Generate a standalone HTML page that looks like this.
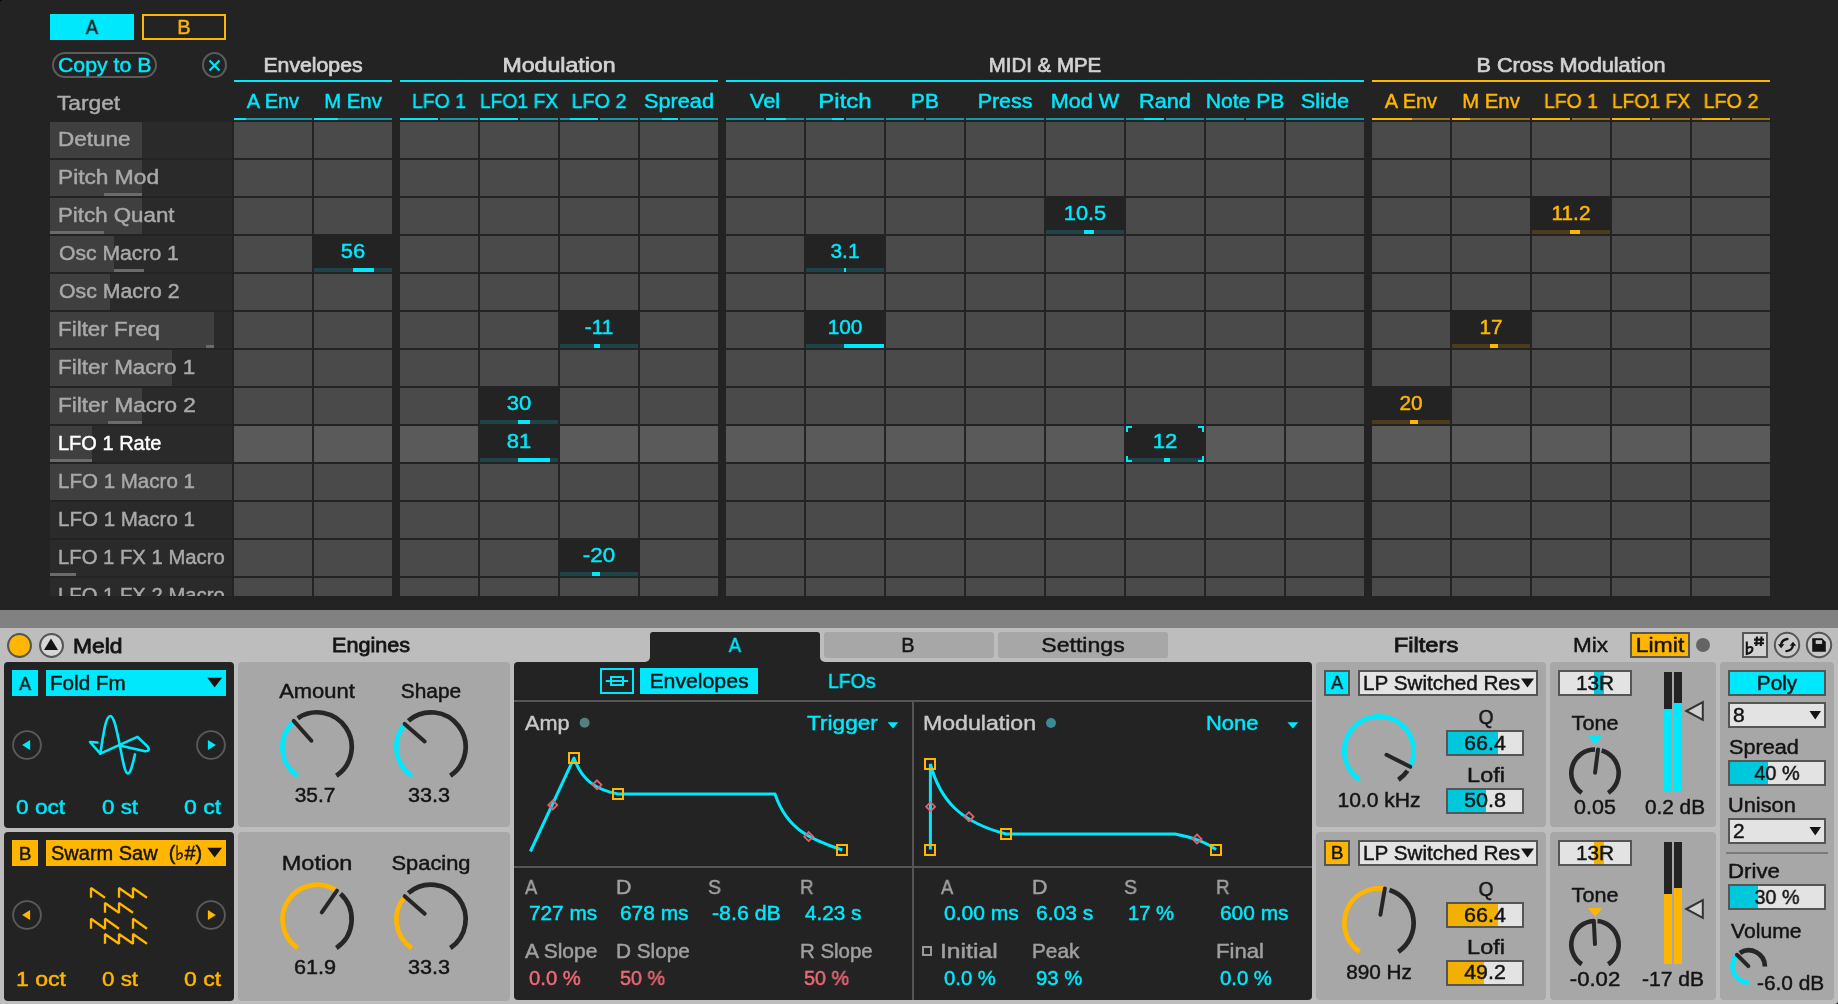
<!DOCTYPE html>
<html><head><meta charset="utf-8"><style>
html,body{margin:0;padding:0;background:#232323}
#root{position:relative;width:1838px;height:1004px;overflow:hidden;background:#232323;font-family:"Liberation Sans",sans-serif}
.r{position:absolute}
.t{position:absolute;line-height:1;white-space:nowrap;-webkit-text-stroke:0.45px currentColor;will-change:transform}
svg.ov{position:absolute;left:0;top:0}
</style></head><body><div id="root">
<div class="r" style="left:50px;top:14px;width:84px;height:26px;background:#00e8fc;"></div>
<div class="t" style="left:50.0px;top:16.87px;width:84px;text-align:center;font-size:20px;color:#1e1e1e;font-weight:normal;transform-origin:50% 0;transform:scaleX(0.9173);">A</div>
<div class="r" style="left:142px;top:14px;width:84px;height:26px;background:transparent;border:2px solid #ffb600;box-sizing:border-box"></div>
<div class="t" style="left:142.0px;top:16.87px;width:84px;text-align:center;font-size:20px;color:#ffb600;font-weight:normal;transform-origin:50% 0;transform:scaleX(0.9907);">B</div>
<div class="r" style="left:52px;top:52px;width:105px;height:26px;background:transparent;border:2px solid #5c5c5c;border-radius:13px;box-sizing:border-box"></div>
<div class="t" style="left:57.7px;top:55.37px;font-size:20px;color:#00e8fc;font-weight:normal;transform-origin:0 0;transform:scaleX(1.0641);">Copy to B</div>
<div class="r" style="left:202px;top:52px;width:25px;height:26px;background:transparent;border:2px solid #5c5c5c;border-radius:50%;box-sizing:border-box"></div>
<svg class="r" style="left:202px;top:52px" width="25" height="26"><path d="M7.5,8.5 L17.5,18.5 M17.5,8.5 L7.5,18.5" stroke="#00e8fc" stroke-width="2"/></svg>
<div class="t" style="left:57.3px;top:93.07px;font-size:20px;color:#ababab;font-weight:normal;transform-origin:0 0;transform:scaleX(1.1364);">Target</div>
<div class="r" style="left:0;top:0;width:1838px;height:596px;overflow:hidden">
<div class="t" style="left:214.0px;top:54.67px;width:198px;text-align:center;font-size:20px;color:#d2d2d2;font-weight:normal;transform-origin:50% 0;transform:scaleX(1.0615);-webkit-text-stroke:0.7px currentColor">Envelopes</div>
<div class="r" style="left:234px;top:80px;width:158px;height:2px;background:#00e8fc;"></div>
<div class="t" style="left:228.0px;top:91.07px;width:90px;text-align:center;font-size:20px;color:#00e8fc;font-weight:normal;transform-origin:50% 0;">A Env</div>
<div class="r" style="left:234px;top:118px;width:78px;height:2px;background:#1499a8;"></div>
<div class="r" style="left:234px;top:118px;width:12px;height:2px;background:#00e8fc;"></div>
<div class="r" style="left:234px;top:122px;width:78px;height:36px;background:#4a4a4a;"></div>
<div class="r" style="left:234px;top:160px;width:78px;height:36px;background:#4a4a4a;"></div>
<div class="r" style="left:234px;top:198px;width:78px;height:36px;background:#4a4a4a;"></div>
<div class="r" style="left:234px;top:236px;width:78px;height:36px;background:#4a4a4a;"></div>
<div class="r" style="left:234px;top:274px;width:78px;height:36px;background:#4a4a4a;"></div>
<div class="r" style="left:234px;top:312px;width:78px;height:36px;background:#4a4a4a;"></div>
<div class="r" style="left:234px;top:350px;width:78px;height:36px;background:#4a4a4a;"></div>
<div class="r" style="left:234px;top:388px;width:78px;height:36px;background:#4a4a4a;"></div>
<div class="r" style="left:234px;top:426px;width:78px;height:36px;background:#5a5a5a;"></div>
<div class="r" style="left:234px;top:464px;width:78px;height:36px;background:#4a4a4a;"></div>
<div class="r" style="left:234px;top:502px;width:78px;height:36px;background:#4a4a4a;"></div>
<div class="r" style="left:234px;top:540px;width:78px;height:36px;background:#4a4a4a;"></div>
<div class="r" style="left:234px;top:578px;width:78px;height:36px;background:#4a4a4a;"></div>
<div class="t" style="left:308.0px;top:91.07px;width:90px;text-align:center;font-size:20px;color:#00e8fc;font-weight:normal;transform-origin:50% 0;transform:scaleX(1.0182);">M Env</div>
<div class="r" style="left:314px;top:118px;width:78px;height:2px;background:#1499a8;"></div>
<div class="r" style="left:314px;top:118px;width:24px;height:2px;background:#00e8fc;"></div>
<div class="r" style="left:314px;top:122px;width:78px;height:36px;background:#4a4a4a;"></div>
<div class="r" style="left:314px;top:160px;width:78px;height:36px;background:#4a4a4a;"></div>
<div class="r" style="left:314px;top:198px;width:78px;height:36px;background:#4a4a4a;"></div>
<div class="r" style="left:314px;top:236px;width:78px;height:36px;background:#4a4a4a;"></div>
<div class="r" style="left:314px;top:274px;width:78px;height:36px;background:#4a4a4a;"></div>
<div class="r" style="left:314px;top:312px;width:78px;height:36px;background:#4a4a4a;"></div>
<div class="r" style="left:314px;top:350px;width:78px;height:36px;background:#4a4a4a;"></div>
<div class="r" style="left:314px;top:388px;width:78px;height:36px;background:#4a4a4a;"></div>
<div class="r" style="left:314px;top:426px;width:78px;height:36px;background:#5a5a5a;"></div>
<div class="r" style="left:314px;top:464px;width:78px;height:36px;background:#4a4a4a;"></div>
<div class="r" style="left:314px;top:502px;width:78px;height:36px;background:#4a4a4a;"></div>
<div class="r" style="left:314px;top:540px;width:78px;height:36px;background:#4a4a4a;"></div>
<div class="r" style="left:314px;top:578px;width:78px;height:36px;background:#4a4a4a;"></div>
<div class="t" style="left:380.0px;top:54.67px;width:358px;text-align:center;font-size:20px;color:#d2d2d2;font-weight:normal;transform-origin:50% 0;transform:scaleX(1.1558);-webkit-text-stroke:0.7px currentColor">Modulation</div>
<div class="r" style="left:400px;top:80px;width:318px;height:2px;background:#00e8fc;"></div>
<div class="t" style="left:394.0px;top:91.07px;width:90px;text-align:center;font-size:20px;color:#00e8fc;font-weight:normal;transform-origin:50% 0;transform:scaleX(0.9699);">LFO 1</div>
<div class="r" style="left:400px;top:118px;width:38px;height:2px;background:#1499a8;"></div>
<div class="r" style="left:440px;top:118px;width:38px;height:2px;background:#1499a8;"></div>
<div class="r" style="left:400px;top:118px;width:38px;height:2px;background:#00e8fc;"></div>
<div class="r" style="left:400px;top:122px;width:78px;height:36px;background:#4a4a4a;"></div>
<div class="r" style="left:400px;top:160px;width:78px;height:36px;background:#4a4a4a;"></div>
<div class="r" style="left:400px;top:198px;width:78px;height:36px;background:#4a4a4a;"></div>
<div class="r" style="left:400px;top:236px;width:78px;height:36px;background:#4a4a4a;"></div>
<div class="r" style="left:400px;top:274px;width:78px;height:36px;background:#4a4a4a;"></div>
<div class="r" style="left:400px;top:312px;width:78px;height:36px;background:#4a4a4a;"></div>
<div class="r" style="left:400px;top:350px;width:78px;height:36px;background:#4a4a4a;"></div>
<div class="r" style="left:400px;top:388px;width:78px;height:36px;background:#4a4a4a;"></div>
<div class="r" style="left:400px;top:426px;width:78px;height:36px;background:#5a5a5a;"></div>
<div class="r" style="left:400px;top:464px;width:78px;height:36px;background:#4a4a4a;"></div>
<div class="r" style="left:400px;top:502px;width:78px;height:36px;background:#4a4a4a;"></div>
<div class="r" style="left:400px;top:540px;width:78px;height:36px;background:#4a4a4a;"></div>
<div class="r" style="left:400px;top:578px;width:78px;height:36px;background:#4a4a4a;"></div>
<div class="t" style="left:474.0px;top:91.07px;width:90px;text-align:center;font-size:20px;color:#00e8fc;font-weight:normal;transform-origin:50% 0;transform:scaleX(0.9659);">LFO1 FX</div>
<div class="r" style="left:480px;top:118px;width:38px;height:2px;background:#1499a8;"></div>
<div class="r" style="left:520px;top:118px;width:38px;height:2px;background:#1499a8;"></div>
<div class="r" style="left:480px;top:118px;width:38px;height:2px;background:#00e8fc;"></div>
<div class="r" style="left:480px;top:122px;width:78px;height:36px;background:#4a4a4a;"></div>
<div class="r" style="left:480px;top:160px;width:78px;height:36px;background:#4a4a4a;"></div>
<div class="r" style="left:480px;top:198px;width:78px;height:36px;background:#4a4a4a;"></div>
<div class="r" style="left:480px;top:236px;width:78px;height:36px;background:#4a4a4a;"></div>
<div class="r" style="left:480px;top:274px;width:78px;height:36px;background:#4a4a4a;"></div>
<div class="r" style="left:480px;top:312px;width:78px;height:36px;background:#4a4a4a;"></div>
<div class="r" style="left:480px;top:350px;width:78px;height:36px;background:#4a4a4a;"></div>
<div class="r" style="left:480px;top:388px;width:78px;height:36px;background:#4a4a4a;"></div>
<div class="r" style="left:480px;top:426px;width:78px;height:36px;background:#5a5a5a;"></div>
<div class="r" style="left:480px;top:464px;width:78px;height:36px;background:#4a4a4a;"></div>
<div class="r" style="left:480px;top:502px;width:78px;height:36px;background:#4a4a4a;"></div>
<div class="r" style="left:480px;top:540px;width:78px;height:36px;background:#4a4a4a;"></div>
<div class="r" style="left:480px;top:578px;width:78px;height:36px;background:#4a4a4a;"></div>
<div class="t" style="left:554.0px;top:91.07px;width:90px;text-align:center;font-size:20px;color:#00e8fc;font-weight:normal;transform-origin:50% 0;transform:scaleX(0.9868);">LFO 2</div>
<div class="r" style="left:560px;top:118px;width:38px;height:2px;background:#1499a8;"></div>
<div class="r" style="left:600px;top:118px;width:38px;height:2px;background:#1499a8;"></div>
<div class="r" style="left:570px;top:118px;width:28px;height:2px;background:#00e8fc;"></div>
<div class="r" style="left:560px;top:122px;width:78px;height:36px;background:#4a4a4a;"></div>
<div class="r" style="left:560px;top:160px;width:78px;height:36px;background:#4a4a4a;"></div>
<div class="r" style="left:560px;top:198px;width:78px;height:36px;background:#4a4a4a;"></div>
<div class="r" style="left:560px;top:236px;width:78px;height:36px;background:#4a4a4a;"></div>
<div class="r" style="left:560px;top:274px;width:78px;height:36px;background:#4a4a4a;"></div>
<div class="r" style="left:560px;top:312px;width:78px;height:36px;background:#4a4a4a;"></div>
<div class="r" style="left:560px;top:350px;width:78px;height:36px;background:#4a4a4a;"></div>
<div class="r" style="left:560px;top:388px;width:78px;height:36px;background:#4a4a4a;"></div>
<div class="r" style="left:560px;top:426px;width:78px;height:36px;background:#5a5a5a;"></div>
<div class="r" style="left:560px;top:464px;width:78px;height:36px;background:#4a4a4a;"></div>
<div class="r" style="left:560px;top:502px;width:78px;height:36px;background:#4a4a4a;"></div>
<div class="r" style="left:560px;top:540px;width:78px;height:36px;background:#4a4a4a;"></div>
<div class="r" style="left:560px;top:578px;width:78px;height:36px;background:#4a4a4a;"></div>
<div class="t" style="left:634.0px;top:91.07px;width:90px;text-align:center;font-size:20px;color:#00e8fc;font-weight:normal;transform-origin:50% 0;transform:scaleX(1.0833);">Spread</div>
<div class="r" style="left:640px;top:118px;width:38px;height:2px;background:#1499a8;"></div>
<div class="r" style="left:680px;top:118px;width:38px;height:2px;background:#1499a8;"></div>
<div class="r" style="left:662px;top:118px;width:16px;height:2px;background:#00e8fc;"></div>
<div class="r" style="left:640px;top:122px;width:78px;height:36px;background:#4a4a4a;"></div>
<div class="r" style="left:640px;top:160px;width:78px;height:36px;background:#4a4a4a;"></div>
<div class="r" style="left:640px;top:198px;width:78px;height:36px;background:#4a4a4a;"></div>
<div class="r" style="left:640px;top:236px;width:78px;height:36px;background:#4a4a4a;"></div>
<div class="r" style="left:640px;top:274px;width:78px;height:36px;background:#4a4a4a;"></div>
<div class="r" style="left:640px;top:312px;width:78px;height:36px;background:#4a4a4a;"></div>
<div class="r" style="left:640px;top:350px;width:78px;height:36px;background:#4a4a4a;"></div>
<div class="r" style="left:640px;top:388px;width:78px;height:36px;background:#4a4a4a;"></div>
<div class="r" style="left:640px;top:426px;width:78px;height:36px;background:#5a5a5a;"></div>
<div class="r" style="left:640px;top:464px;width:78px;height:36px;background:#4a4a4a;"></div>
<div class="r" style="left:640px;top:502px;width:78px;height:36px;background:#4a4a4a;"></div>
<div class="r" style="left:640px;top:540px;width:78px;height:36px;background:#4a4a4a;"></div>
<div class="r" style="left:640px;top:578px;width:78px;height:36px;background:#4a4a4a;"></div>
<div class="t" style="left:706.0px;top:54.67px;width:678px;text-align:center;font-size:20px;color:#d2d2d2;font-weight:normal;transform-origin:50% 0;transform:scaleX(1.0214);-webkit-text-stroke:0.7px currentColor">MIDI &amp; MPE</div>
<div class="r" style="left:726px;top:80px;width:638px;height:2px;background:#00e8fc;"></div>
<div class="t" style="left:720.0px;top:91.07px;width:90px;text-align:center;font-size:20px;color:#00e8fc;font-weight:normal;transform-origin:50% 0;transform:scaleX(1.0947);">Vel</div>
<div class="r" style="left:726px;top:118px;width:38px;height:2px;background:#1499a8;"></div>
<div class="r" style="left:766px;top:118px;width:38px;height:2px;background:#1499a8;"></div>
<div class="r" style="left:766px;top:118px;width:20px;height:2px;background:#00e8fc;"></div>
<div class="r" style="left:726px;top:122px;width:78px;height:36px;background:#4a4a4a;"></div>
<div class="r" style="left:726px;top:160px;width:78px;height:36px;background:#4a4a4a;"></div>
<div class="r" style="left:726px;top:198px;width:78px;height:36px;background:#4a4a4a;"></div>
<div class="r" style="left:726px;top:236px;width:78px;height:36px;background:#4a4a4a;"></div>
<div class="r" style="left:726px;top:274px;width:78px;height:36px;background:#4a4a4a;"></div>
<div class="r" style="left:726px;top:312px;width:78px;height:36px;background:#4a4a4a;"></div>
<div class="r" style="left:726px;top:350px;width:78px;height:36px;background:#4a4a4a;"></div>
<div class="r" style="left:726px;top:388px;width:78px;height:36px;background:#4a4a4a;"></div>
<div class="r" style="left:726px;top:426px;width:78px;height:36px;background:#5a5a5a;"></div>
<div class="r" style="left:726px;top:464px;width:78px;height:36px;background:#4a4a4a;"></div>
<div class="r" style="left:726px;top:502px;width:78px;height:36px;background:#4a4a4a;"></div>
<div class="r" style="left:726px;top:540px;width:78px;height:36px;background:#4a4a4a;"></div>
<div class="r" style="left:726px;top:578px;width:78px;height:36px;background:#4a4a4a;"></div>
<div class="t" style="left:800.0px;top:91.07px;width:90px;text-align:center;font-size:20px;color:#00e8fc;font-weight:normal;transform-origin:50% 0;transform:scaleX(1.1995);">Pitch</div>
<div class="r" style="left:806px;top:118px;width:38px;height:2px;background:#1499a8;"></div>
<div class="r" style="left:846px;top:118px;width:38px;height:2px;background:#1499a8;"></div>
<div class="r" style="left:832px;top:118px;width:12px;height:2px;background:#00e8fc;"></div>
<div class="r" style="left:806px;top:122px;width:78px;height:36px;background:#4a4a4a;"></div>
<div class="r" style="left:806px;top:160px;width:78px;height:36px;background:#4a4a4a;"></div>
<div class="r" style="left:806px;top:198px;width:78px;height:36px;background:#4a4a4a;"></div>
<div class="r" style="left:806px;top:236px;width:78px;height:36px;background:#4a4a4a;"></div>
<div class="r" style="left:806px;top:274px;width:78px;height:36px;background:#4a4a4a;"></div>
<div class="r" style="left:806px;top:312px;width:78px;height:36px;background:#4a4a4a;"></div>
<div class="r" style="left:806px;top:350px;width:78px;height:36px;background:#4a4a4a;"></div>
<div class="r" style="left:806px;top:388px;width:78px;height:36px;background:#4a4a4a;"></div>
<div class="r" style="left:806px;top:426px;width:78px;height:36px;background:#5a5a5a;"></div>
<div class="r" style="left:806px;top:464px;width:78px;height:36px;background:#4a4a4a;"></div>
<div class="r" style="left:806px;top:502px;width:78px;height:36px;background:#4a4a4a;"></div>
<div class="r" style="left:806px;top:540px;width:78px;height:36px;background:#4a4a4a;"></div>
<div class="r" style="left:806px;top:578px;width:78px;height:36px;background:#4a4a4a;"></div>
<div class="t" style="left:880.0px;top:91.07px;width:90px;text-align:center;font-size:20px;color:#00e8fc;font-weight:normal;transform-origin:50% 0;transform:scaleX(1.0400);">PB</div>
<div class="r" style="left:886px;top:118px;width:38px;height:2px;background:#1499a8;"></div>
<div class="r" style="left:926px;top:118px;width:38px;height:2px;background:#1499a8;"></div>
<div class="r" style="left:886px;top:122px;width:78px;height:36px;background:#4a4a4a;"></div>
<div class="r" style="left:886px;top:160px;width:78px;height:36px;background:#4a4a4a;"></div>
<div class="r" style="left:886px;top:198px;width:78px;height:36px;background:#4a4a4a;"></div>
<div class="r" style="left:886px;top:236px;width:78px;height:36px;background:#4a4a4a;"></div>
<div class="r" style="left:886px;top:274px;width:78px;height:36px;background:#4a4a4a;"></div>
<div class="r" style="left:886px;top:312px;width:78px;height:36px;background:#4a4a4a;"></div>
<div class="r" style="left:886px;top:350px;width:78px;height:36px;background:#4a4a4a;"></div>
<div class="r" style="left:886px;top:388px;width:78px;height:36px;background:#4a4a4a;"></div>
<div class="r" style="left:886px;top:426px;width:78px;height:36px;background:#5a5a5a;"></div>
<div class="r" style="left:886px;top:464px;width:78px;height:36px;background:#4a4a4a;"></div>
<div class="r" style="left:886px;top:502px;width:78px;height:36px;background:#4a4a4a;"></div>
<div class="r" style="left:886px;top:540px;width:78px;height:36px;background:#4a4a4a;"></div>
<div class="r" style="left:886px;top:578px;width:78px;height:36px;background:#4a4a4a;"></div>
<div class="t" style="left:960.0px;top:91.07px;width:90px;text-align:center;font-size:20px;color:#00e8fc;font-weight:normal;transform-origin:50% 0;transform:scaleX(1.0697);">Press</div>
<div class="r" style="left:966px;top:118px;width:78px;height:2px;background:#1499a8;"></div>
<div class="r" style="left:966px;top:122px;width:78px;height:36px;background:#4a4a4a;"></div>
<div class="r" style="left:966px;top:160px;width:78px;height:36px;background:#4a4a4a;"></div>
<div class="r" style="left:966px;top:198px;width:78px;height:36px;background:#4a4a4a;"></div>
<div class="r" style="left:966px;top:236px;width:78px;height:36px;background:#4a4a4a;"></div>
<div class="r" style="left:966px;top:274px;width:78px;height:36px;background:#4a4a4a;"></div>
<div class="r" style="left:966px;top:312px;width:78px;height:36px;background:#4a4a4a;"></div>
<div class="r" style="left:966px;top:350px;width:78px;height:36px;background:#4a4a4a;"></div>
<div class="r" style="left:966px;top:388px;width:78px;height:36px;background:#4a4a4a;"></div>
<div class="r" style="left:966px;top:426px;width:78px;height:36px;background:#5a5a5a;"></div>
<div class="r" style="left:966px;top:464px;width:78px;height:36px;background:#4a4a4a;"></div>
<div class="r" style="left:966px;top:502px;width:78px;height:36px;background:#4a4a4a;"></div>
<div class="r" style="left:966px;top:540px;width:78px;height:36px;background:#4a4a4a;"></div>
<div class="r" style="left:966px;top:578px;width:78px;height:36px;background:#4a4a4a;"></div>
<div class="t" style="left:1040.0px;top:91.07px;width:90px;text-align:center;font-size:20px;color:#00e8fc;font-weight:normal;transform-origin:50% 0;transform:scaleX(1.0794);">Mod W</div>
<div class="r" style="left:1046px;top:118px;width:78px;height:2px;background:#1499a8;"></div>
<div class="r" style="left:1046px;top:122px;width:78px;height:36px;background:#4a4a4a;"></div>
<div class="r" style="left:1046px;top:160px;width:78px;height:36px;background:#4a4a4a;"></div>
<div class="r" style="left:1046px;top:198px;width:78px;height:36px;background:#4a4a4a;"></div>
<div class="r" style="left:1046px;top:236px;width:78px;height:36px;background:#4a4a4a;"></div>
<div class="r" style="left:1046px;top:274px;width:78px;height:36px;background:#4a4a4a;"></div>
<div class="r" style="left:1046px;top:312px;width:78px;height:36px;background:#4a4a4a;"></div>
<div class="r" style="left:1046px;top:350px;width:78px;height:36px;background:#4a4a4a;"></div>
<div class="r" style="left:1046px;top:388px;width:78px;height:36px;background:#4a4a4a;"></div>
<div class="r" style="left:1046px;top:426px;width:78px;height:36px;background:#5a5a5a;"></div>
<div class="r" style="left:1046px;top:464px;width:78px;height:36px;background:#4a4a4a;"></div>
<div class="r" style="left:1046px;top:502px;width:78px;height:36px;background:#4a4a4a;"></div>
<div class="r" style="left:1046px;top:540px;width:78px;height:36px;background:#4a4a4a;"></div>
<div class="r" style="left:1046px;top:578px;width:78px;height:36px;background:#4a4a4a;"></div>
<div class="t" style="left:1120.0px;top:91.07px;width:90px;text-align:center;font-size:20px;color:#00e8fc;font-weight:normal;transform-origin:50% 0;transform:scaleX(1.0844);">Rand</div>
<div class="r" style="left:1126px;top:118px;width:38px;height:2px;background:#1499a8;"></div>
<div class="r" style="left:1166px;top:118px;width:38px;height:2px;background:#1499a8;"></div>
<div class="r" style="left:1144px;top:118px;width:20px;height:2px;background:#00e8fc;"></div>
<div class="r" style="left:1126px;top:122px;width:78px;height:36px;background:#4a4a4a;"></div>
<div class="r" style="left:1126px;top:160px;width:78px;height:36px;background:#4a4a4a;"></div>
<div class="r" style="left:1126px;top:198px;width:78px;height:36px;background:#4a4a4a;"></div>
<div class="r" style="left:1126px;top:236px;width:78px;height:36px;background:#4a4a4a;"></div>
<div class="r" style="left:1126px;top:274px;width:78px;height:36px;background:#4a4a4a;"></div>
<div class="r" style="left:1126px;top:312px;width:78px;height:36px;background:#4a4a4a;"></div>
<div class="r" style="left:1126px;top:350px;width:78px;height:36px;background:#4a4a4a;"></div>
<div class="r" style="left:1126px;top:388px;width:78px;height:36px;background:#4a4a4a;"></div>
<div class="r" style="left:1126px;top:426px;width:78px;height:36px;background:#5a5a5a;"></div>
<div class="r" style="left:1126px;top:464px;width:78px;height:36px;background:#4a4a4a;"></div>
<div class="r" style="left:1126px;top:502px;width:78px;height:36px;background:#4a4a4a;"></div>
<div class="r" style="left:1126px;top:540px;width:78px;height:36px;background:#4a4a4a;"></div>
<div class="r" style="left:1126px;top:578px;width:78px;height:36px;background:#4a4a4a;"></div>
<div class="t" style="left:1200.0px;top:91.07px;width:90px;text-align:center;font-size:20px;color:#00e8fc;font-weight:normal;transform-origin:50% 0;transform:scaleX(1.0557);">Note PB</div>
<div class="r" style="left:1206px;top:118px;width:38px;height:2px;background:#1499a8;"></div>
<div class="r" style="left:1246px;top:118px;width:38px;height:2px;background:#1499a8;"></div>
<div class="r" style="left:1206px;top:122px;width:78px;height:36px;background:#4a4a4a;"></div>
<div class="r" style="left:1206px;top:160px;width:78px;height:36px;background:#4a4a4a;"></div>
<div class="r" style="left:1206px;top:198px;width:78px;height:36px;background:#4a4a4a;"></div>
<div class="r" style="left:1206px;top:236px;width:78px;height:36px;background:#4a4a4a;"></div>
<div class="r" style="left:1206px;top:274px;width:78px;height:36px;background:#4a4a4a;"></div>
<div class="r" style="left:1206px;top:312px;width:78px;height:36px;background:#4a4a4a;"></div>
<div class="r" style="left:1206px;top:350px;width:78px;height:36px;background:#4a4a4a;"></div>
<div class="r" style="left:1206px;top:388px;width:78px;height:36px;background:#4a4a4a;"></div>
<div class="r" style="left:1206px;top:426px;width:78px;height:36px;background:#5a5a5a;"></div>
<div class="r" style="left:1206px;top:464px;width:78px;height:36px;background:#4a4a4a;"></div>
<div class="r" style="left:1206px;top:502px;width:78px;height:36px;background:#4a4a4a;"></div>
<div class="r" style="left:1206px;top:540px;width:78px;height:36px;background:#4a4a4a;"></div>
<div class="r" style="left:1206px;top:578px;width:78px;height:36px;background:#4a4a4a;"></div>
<div class="t" style="left:1280.0px;top:91.07px;width:90px;text-align:center;font-size:20px;color:#00e8fc;font-weight:normal;transform-origin:50% 0;transform:scaleX(1.0888);">Slide</div>
<div class="r" style="left:1286px;top:118px;width:78px;height:2px;background:#1499a8;"></div>
<div class="r" style="left:1286px;top:122px;width:78px;height:36px;background:#4a4a4a;"></div>
<div class="r" style="left:1286px;top:160px;width:78px;height:36px;background:#4a4a4a;"></div>
<div class="r" style="left:1286px;top:198px;width:78px;height:36px;background:#4a4a4a;"></div>
<div class="r" style="left:1286px;top:236px;width:78px;height:36px;background:#4a4a4a;"></div>
<div class="r" style="left:1286px;top:274px;width:78px;height:36px;background:#4a4a4a;"></div>
<div class="r" style="left:1286px;top:312px;width:78px;height:36px;background:#4a4a4a;"></div>
<div class="r" style="left:1286px;top:350px;width:78px;height:36px;background:#4a4a4a;"></div>
<div class="r" style="left:1286px;top:388px;width:78px;height:36px;background:#4a4a4a;"></div>
<div class="r" style="left:1286px;top:426px;width:78px;height:36px;background:#5a5a5a;"></div>
<div class="r" style="left:1286px;top:464px;width:78px;height:36px;background:#4a4a4a;"></div>
<div class="r" style="left:1286px;top:502px;width:78px;height:36px;background:#4a4a4a;"></div>
<div class="r" style="left:1286px;top:540px;width:78px;height:36px;background:#4a4a4a;"></div>
<div class="r" style="left:1286px;top:578px;width:78px;height:36px;background:#4a4a4a;"></div>
<div class="t" style="left:1352.0px;top:54.67px;width:438px;text-align:center;font-size:20px;color:#d2d2d2;font-weight:normal;transform-origin:50% 0;transform:scaleX(1.0833);-webkit-text-stroke:0.7px currentColor">B Cross Modulation</div>
<div class="r" style="left:1372px;top:80px;width:398px;height:2px;background:#ffb600;"></div>
<div class="t" style="left:1366.0px;top:91.07px;width:90px;text-align:center;font-size:20px;color:#ffb600;font-weight:normal;transform-origin:50% 0;">A Env</div>
<div class="r" style="left:1372px;top:118px;width:78px;height:2px;background:#9a7420;"></div>
<div class="r" style="left:1372px;top:118px;width:40px;height:2px;background:#ffb600;"></div>
<div class="r" style="left:1372px;top:122px;width:78px;height:36px;background:#4a4a4a;"></div>
<div class="r" style="left:1372px;top:160px;width:78px;height:36px;background:#4a4a4a;"></div>
<div class="r" style="left:1372px;top:198px;width:78px;height:36px;background:#4a4a4a;"></div>
<div class="r" style="left:1372px;top:236px;width:78px;height:36px;background:#4a4a4a;"></div>
<div class="r" style="left:1372px;top:274px;width:78px;height:36px;background:#4a4a4a;"></div>
<div class="r" style="left:1372px;top:312px;width:78px;height:36px;background:#4a4a4a;"></div>
<div class="r" style="left:1372px;top:350px;width:78px;height:36px;background:#4a4a4a;"></div>
<div class="r" style="left:1372px;top:388px;width:78px;height:36px;background:#4a4a4a;"></div>
<div class="r" style="left:1372px;top:426px;width:78px;height:36px;background:#5a5a5a;"></div>
<div class="r" style="left:1372px;top:464px;width:78px;height:36px;background:#4a4a4a;"></div>
<div class="r" style="left:1372px;top:502px;width:78px;height:36px;background:#4a4a4a;"></div>
<div class="r" style="left:1372px;top:540px;width:78px;height:36px;background:#4a4a4a;"></div>
<div class="r" style="left:1372px;top:578px;width:78px;height:36px;background:#4a4a4a;"></div>
<div class="t" style="left:1446.0px;top:91.07px;width:90px;text-align:center;font-size:20px;color:#ffb600;font-weight:normal;transform-origin:50% 0;transform:scaleX(1.0182);">M Env</div>
<div class="r" style="left:1452px;top:118px;width:78px;height:2px;background:#9a7420;"></div>
<div class="r" style="left:1452px;top:118px;width:18px;height:2px;background:#ffb600;"></div>
<div class="r" style="left:1452px;top:122px;width:78px;height:36px;background:#4a4a4a;"></div>
<div class="r" style="left:1452px;top:160px;width:78px;height:36px;background:#4a4a4a;"></div>
<div class="r" style="left:1452px;top:198px;width:78px;height:36px;background:#4a4a4a;"></div>
<div class="r" style="left:1452px;top:236px;width:78px;height:36px;background:#4a4a4a;"></div>
<div class="r" style="left:1452px;top:274px;width:78px;height:36px;background:#4a4a4a;"></div>
<div class="r" style="left:1452px;top:312px;width:78px;height:36px;background:#4a4a4a;"></div>
<div class="r" style="left:1452px;top:350px;width:78px;height:36px;background:#4a4a4a;"></div>
<div class="r" style="left:1452px;top:388px;width:78px;height:36px;background:#4a4a4a;"></div>
<div class="r" style="left:1452px;top:426px;width:78px;height:36px;background:#5a5a5a;"></div>
<div class="r" style="left:1452px;top:464px;width:78px;height:36px;background:#4a4a4a;"></div>
<div class="r" style="left:1452px;top:502px;width:78px;height:36px;background:#4a4a4a;"></div>
<div class="r" style="left:1452px;top:540px;width:78px;height:36px;background:#4a4a4a;"></div>
<div class="r" style="left:1452px;top:578px;width:78px;height:36px;background:#4a4a4a;"></div>
<div class="t" style="left:1526.0px;top:91.07px;width:90px;text-align:center;font-size:20px;color:#ffb600;font-weight:normal;transform-origin:50% 0;transform:scaleX(0.9699);">LFO 1</div>
<div class="r" style="left:1532px;top:118px;width:38px;height:2px;background:#9a7420;"></div>
<div class="r" style="left:1572px;top:118px;width:38px;height:2px;background:#9a7420;"></div>
<div class="r" style="left:1532px;top:118px;width:38px;height:2px;background:#ffb600;"></div>
<div class="r" style="left:1532px;top:122px;width:78px;height:36px;background:#4a4a4a;"></div>
<div class="r" style="left:1532px;top:160px;width:78px;height:36px;background:#4a4a4a;"></div>
<div class="r" style="left:1532px;top:198px;width:78px;height:36px;background:#4a4a4a;"></div>
<div class="r" style="left:1532px;top:236px;width:78px;height:36px;background:#4a4a4a;"></div>
<div class="r" style="left:1532px;top:274px;width:78px;height:36px;background:#4a4a4a;"></div>
<div class="r" style="left:1532px;top:312px;width:78px;height:36px;background:#4a4a4a;"></div>
<div class="r" style="left:1532px;top:350px;width:78px;height:36px;background:#4a4a4a;"></div>
<div class="r" style="left:1532px;top:388px;width:78px;height:36px;background:#4a4a4a;"></div>
<div class="r" style="left:1532px;top:426px;width:78px;height:36px;background:#5a5a5a;"></div>
<div class="r" style="left:1532px;top:464px;width:78px;height:36px;background:#4a4a4a;"></div>
<div class="r" style="left:1532px;top:502px;width:78px;height:36px;background:#4a4a4a;"></div>
<div class="r" style="left:1532px;top:540px;width:78px;height:36px;background:#4a4a4a;"></div>
<div class="r" style="left:1532px;top:578px;width:78px;height:36px;background:#4a4a4a;"></div>
<div class="t" style="left:1606.0px;top:91.07px;width:90px;text-align:center;font-size:20px;color:#ffb600;font-weight:normal;transform-origin:50% 0;transform:scaleX(0.9659);">LFO1 FX</div>
<div class="r" style="left:1612px;top:118px;width:38px;height:2px;background:#9a7420;"></div>
<div class="r" style="left:1652px;top:118px;width:38px;height:2px;background:#9a7420;"></div>
<div class="r" style="left:1612px;top:118px;width:38px;height:2px;background:#ffb600;"></div>
<div class="r" style="left:1612px;top:122px;width:78px;height:36px;background:#4a4a4a;"></div>
<div class="r" style="left:1612px;top:160px;width:78px;height:36px;background:#4a4a4a;"></div>
<div class="r" style="left:1612px;top:198px;width:78px;height:36px;background:#4a4a4a;"></div>
<div class="r" style="left:1612px;top:236px;width:78px;height:36px;background:#4a4a4a;"></div>
<div class="r" style="left:1612px;top:274px;width:78px;height:36px;background:#4a4a4a;"></div>
<div class="r" style="left:1612px;top:312px;width:78px;height:36px;background:#4a4a4a;"></div>
<div class="r" style="left:1612px;top:350px;width:78px;height:36px;background:#4a4a4a;"></div>
<div class="r" style="left:1612px;top:388px;width:78px;height:36px;background:#4a4a4a;"></div>
<div class="r" style="left:1612px;top:426px;width:78px;height:36px;background:#5a5a5a;"></div>
<div class="r" style="left:1612px;top:464px;width:78px;height:36px;background:#4a4a4a;"></div>
<div class="r" style="left:1612px;top:502px;width:78px;height:36px;background:#4a4a4a;"></div>
<div class="r" style="left:1612px;top:540px;width:78px;height:36px;background:#4a4a4a;"></div>
<div class="r" style="left:1612px;top:578px;width:78px;height:36px;background:#4a4a4a;"></div>
<div class="t" style="left:1686.0px;top:91.07px;width:90px;text-align:center;font-size:20px;color:#ffb600;font-weight:normal;transform-origin:50% 0;transform:scaleX(0.9868);">LFO 2</div>
<div class="r" style="left:1692px;top:118px;width:38px;height:2px;background:#9a7420;"></div>
<div class="r" style="left:1732px;top:118px;width:38px;height:2px;background:#9a7420;"></div>
<div class="r" style="left:1702px;top:118px;width:28px;height:2px;background:#ffb600;"></div>
<div class="r" style="left:1692px;top:122px;width:78px;height:36px;background:#4a4a4a;"></div>
<div class="r" style="left:1692px;top:160px;width:78px;height:36px;background:#4a4a4a;"></div>
<div class="r" style="left:1692px;top:198px;width:78px;height:36px;background:#4a4a4a;"></div>
<div class="r" style="left:1692px;top:236px;width:78px;height:36px;background:#4a4a4a;"></div>
<div class="r" style="left:1692px;top:274px;width:78px;height:36px;background:#4a4a4a;"></div>
<div class="r" style="left:1692px;top:312px;width:78px;height:36px;background:#4a4a4a;"></div>
<div class="r" style="left:1692px;top:350px;width:78px;height:36px;background:#4a4a4a;"></div>
<div class="r" style="left:1692px;top:388px;width:78px;height:36px;background:#4a4a4a;"></div>
<div class="r" style="left:1692px;top:426px;width:78px;height:36px;background:#5a5a5a;"></div>
<div class="r" style="left:1692px;top:464px;width:78px;height:36px;background:#4a4a4a;"></div>
<div class="r" style="left:1692px;top:502px;width:78px;height:36px;background:#4a4a4a;"></div>
<div class="r" style="left:1692px;top:540px;width:78px;height:36px;background:#4a4a4a;"></div>
<div class="r" style="left:1692px;top:578px;width:78px;height:36px;background:#4a4a4a;"></div>
<div class="r" style="left:50px;top:122px;width:182px;height:36px;background:#2a2a2a;"></div>
<div class="r" style="left:50px;top:122px;width:92px;height:36px;background:#3f3f3f;"></div>
<div class="t" style="left:58.0px;top:129.07px;font-size:20px;color:#a9a9a9;font-weight:normal;transform-origin:0 0;transform:scaleX(1.1240);">Detune</div>
<div class="r" style="left:50px;top:160px;width:182px;height:36px;background:#2a2a2a;"></div>
<div class="r" style="left:50px;top:160px;width:92px;height:36px;background:#3f3f3f;"></div>
<div class="r" style="left:104px;top:193px;width:38px;height:3px;background:#6b6b6b;"></div>
<div class="t" style="left:58.0px;top:167.07px;font-size:20px;color:#a9a9a9;font-weight:normal;transform-origin:0 0;transform:scaleX(1.1359);">Pitch Mod</div>
<div class="r" style="left:50px;top:198px;width:182px;height:36px;background:#2a2a2a;"></div>
<div class="r" style="left:50px;top:198px;width:92px;height:36px;background:#3f3f3f;"></div>
<div class="r" style="left:50px;top:231px;width:54px;height:3px;background:#6b6b6b;"></div>
<div class="t" style="left:58.0px;top:205.07px;font-size:20px;color:#a9a9a9;font-weight:normal;transform-origin:0 0;transform:scaleX(1.1149);">Pitch Quant</div>
<div class="r" style="left:50px;top:236px;width:182px;height:36px;background:#2a2a2a;"></div>
<div class="r" style="left:50px;top:236px;width:64px;height:36px;background:#3f3f3f;"></div>
<div class="r" style="left:114px;top:269px;width:30px;height:3px;background:#6b6b6b;"></div>
<div class="t" style="left:58.8px;top:243.07px;font-size:20px;color:#a9a9a9;font-weight:normal;transform-origin:0 0;transform:scaleX(1.0574);">Osc Macro 1</div>
<div class="r" style="left:50px;top:274px;width:182px;height:36px;background:#2a2a2a;"></div>
<div class="r" style="left:50px;top:274px;width:60px;height:36px;background:#3f3f3f;"></div>
<div class="t" style="left:58.8px;top:281.07px;font-size:20px;color:#a9a9a9;font-weight:normal;transform-origin:0 0;transform:scaleX(1.0628);">Osc Macro 2</div>
<div class="r" style="left:50px;top:312px;width:182px;height:36px;background:#2a2a2a;"></div>
<div class="r" style="left:50px;top:312px;width:164px;height:36px;background:#3f3f3f;"></div>
<div class="r" style="left:206px;top:345px;width:8px;height:3px;background:#6b6b6b;"></div>
<div class="t" style="left:58.0px;top:319.07px;font-size:20px;color:#a9a9a9;font-weight:normal;transform-origin:0 0;transform:scaleX(1.1200);">Filter Freq</div>
<div class="r" style="left:50px;top:350px;width:182px;height:36px;background:#2a2a2a;"></div>
<div class="r" style="left:50px;top:350px;width:122px;height:36px;background:#3f3f3f;"></div>
<div class="t" style="left:58.0px;top:357.07px;font-size:20px;color:#a9a9a9;font-weight:normal;transform-origin:0 0;transform:scaleX(1.1228);">Filter Macro 1</div>
<div class="r" style="left:50px;top:388px;width:182px;height:36px;background:#2a2a2a;"></div>
<div class="r" style="left:50px;top:388px;width:92px;height:36px;background:#3f3f3f;"></div>
<div class="r" style="left:108px;top:421px;width:34px;height:3px;background:#6b6b6b;"></div>
<div class="t" style="left:58.0px;top:395.07px;font-size:20px;color:#a9a9a9;font-weight:normal;transform-origin:0 0;transform:scaleX(1.1279);">Filter Macro 2</div>
<div class="r" style="left:50px;top:426px;width:182px;height:36px;background:#2a2a2a;"></div>
<div class="r" style="left:50px;top:426px;width:42px;height:36px;background:#3f3f3f;"></div>
<div class="r" style="left:50px;top:459px;width:42px;height:3px;background:#6b6b6b;"></div>
<div class="t" style="left:58.2px;top:433.07px;font-size:20px;color:#ffffff;font-weight:normal;transform-origin:0 0;">LFO 1 Rate</div>
<div class="r" style="left:50px;top:464px;width:182px;height:36px;background:#2a2a2a;"></div>
<div class="r" style="left:50px;top:464px;width:182px;height:36px;background:#3f3f3f;"></div>
<div class="t" style="left:58.2px;top:471.07px;font-size:20px;color:#a9a9a9;font-weight:normal;transform-origin:0 0;transform:scaleX(1.0267);">LFO 1 Macro 1</div>
<div class="r" style="left:50px;top:502px;width:182px;height:36px;background:#2a2a2a;"></div>
<div class="t" style="left:58.2px;top:509.07px;font-size:20px;color:#a9a9a9;font-weight:normal;transform-origin:0 0;transform:scaleX(1.0267);">LFO 1 Macro 1</div>
<div class="r" style="left:50px;top:540px;width:182px;height:36px;background:#2a2a2a;"></div>
<div class="r" style="left:50px;top:573px;width:26px;height:3px;background:#6b6b6b;"></div>
<div class="t" style="left:58.2px;top:547.07px;font-size:20px;color:#a9a9a9;font-weight:normal;transform-origin:0 0;transform:scaleX(1.0136);">LFO 1 FX 1 Macro</div>
<div class="r" style="left:50px;top:578px;width:182px;height:36px;background:#2a2a2a;"></div>
<div class="t" style="left:58.2px;top:585.07px;font-size:20px;color:#a9a9a9;font-weight:normal;transform-origin:0 0;transform:scaleX(1.0136);">LFO 1 FX 2 Macro</div>
<div class="r" style="left:314px;top:236px;width:78px;height:36px;background:#232323;"></div>
<div class="r" style="left:314px;top:268px;width:78px;height:4px;background:#1f4347;"></div>
<div class="r" style="left:353px;top:268px;width:21px;height:4px;background:#00e8fc;"></div>
<div class="t" style="left:314.0px;top:241.07px;width:78px;text-align:center;font-size:20px;color:#00e8fc;font-weight:normal;transform-origin:50% 0;transform:scaleX(1.0971);">56</div>
<div class="r" style="left:1046px;top:198px;width:78px;height:36px;background:#232323;"></div>
<div class="r" style="left:1046px;top:230px;width:78px;height:4px;background:#1f4347;"></div>
<div class="r" style="left:1084px;top:230px;width:10px;height:4px;background:#00e8fc;"></div>
<div class="t" style="left:1046.0px;top:203.07px;width:78px;text-align:center;font-size:20px;color:#00e8fc;font-weight:normal;transform-origin:50% 0;transform:scaleX(1.0874);">10.5</div>
<div class="r" style="left:1532px;top:198px;width:78px;height:36px;background:#232323;"></div>
<div class="r" style="left:1532px;top:230px;width:78px;height:4px;background:#4a3c1c;"></div>
<div class="r" style="left:1570px;top:230px;width:10px;height:4px;background:#ffb600;"></div>
<div class="t" style="left:1532.0px;top:203.07px;width:78px;text-align:center;font-size:20px;color:#ffb600;font-weight:normal;transform-origin:50% 0;transform:scaleX(1.0400);">11.2</div>
<div class="r" style="left:806px;top:236px;width:78px;height:36px;background:#232323;"></div>
<div class="r" style="left:806px;top:268px;width:78px;height:4px;background:#1f4347;"></div>
<div class="r" style="left:844px;top:268px;width:2px;height:4px;background:#00e8fc;"></div>
<div class="t" style="left:806.0px;top:241.07px;width:78px;text-align:center;font-size:20px;color:#00e8fc;font-weight:normal;transform-origin:50% 0;transform:scaleX(1.0400);">3.1</div>
<div class="r" style="left:560px;top:312px;width:78px;height:36px;background:#232323;"></div>
<div class="r" style="left:560px;top:344px;width:78px;height:4px;background:#1f4347;"></div>
<div class="r" style="left:594px;top:344px;width:6px;height:4px;background:#00e8fc;"></div>
<div class="t" style="left:560.0px;top:317.07px;width:78px;text-align:center;font-size:20px;color:#00e8fc;font-weight:normal;transform-origin:50% 0;transform:scaleX(1.0400);">-11</div>
<div class="r" style="left:806px;top:312px;width:78px;height:36px;background:#232323;"></div>
<div class="r" style="left:806px;top:344px;width:78px;height:4px;background:#1f4347;"></div>
<div class="r" style="left:844px;top:344px;width:40px;height:4px;background:#00e8fc;"></div>
<div class="t" style="left:806.0px;top:317.07px;width:78px;text-align:center;font-size:20px;color:#00e8fc;font-weight:normal;transform-origin:50% 0;transform:scaleX(1.0400);">100</div>
<div class="r" style="left:1452px;top:312px;width:78px;height:36px;background:#232323;"></div>
<div class="r" style="left:1452px;top:344px;width:78px;height:4px;background:#4a3c1c;"></div>
<div class="r" style="left:1490px;top:344px;width:8px;height:4px;background:#ffb600;"></div>
<div class="t" style="left:1452.0px;top:317.07px;width:78px;text-align:center;font-size:20px;color:#ffb600;font-weight:normal;transform-origin:50% 0;transform:scaleX(1.0400);">17</div>
<div class="r" style="left:480px;top:388px;width:78px;height:36px;background:#232323;"></div>
<div class="r" style="left:480px;top:420px;width:78px;height:4px;background:#1f4347;"></div>
<div class="r" style="left:518px;top:420px;width:12px;height:4px;background:#00e8fc;"></div>
<div class="t" style="left:480.0px;top:393.07px;width:78px;text-align:center;font-size:20px;color:#00e8fc;font-weight:normal;transform-origin:50% 0;transform:scaleX(1.1010);">30</div>
<div class="r" style="left:1372px;top:388px;width:78px;height:36px;background:#232323;"></div>
<div class="r" style="left:1372px;top:420px;width:78px;height:4px;background:#4a3c1c;"></div>
<div class="r" style="left:1410px;top:420px;width:8px;height:4px;background:#ffb600;"></div>
<div class="t" style="left:1372.0px;top:393.07px;width:78px;text-align:center;font-size:20px;color:#ffb600;font-weight:normal;transform-origin:50% 0;transform:scaleX(1.0400);">20</div>
<div class="r" style="left:480px;top:426px;width:78px;height:36px;background:#232323;"></div>
<div class="r" style="left:480px;top:458px;width:78px;height:4px;background:#1f4347;"></div>
<div class="r" style="left:518px;top:458px;width:32px;height:4px;background:#00e8fc;"></div>
<div class="t" style="left:480.0px;top:431.07px;width:78px;text-align:center;font-size:20px;color:#00e8fc;font-weight:normal;transform-origin:50% 0;transform:scaleX(1.0976);">81</div>
<div class="r" style="left:1126px;top:426px;width:78px;height:36px;background:#232323;"></div>
<div class="r" style="left:1126px;top:458px;width:78px;height:4px;background:#1f4347;"></div>
<div class="r" style="left:1164px;top:458px;width:6px;height:4px;background:#00e8fc;"></div>
<div class="t" style="left:1126.0px;top:431.07px;width:78px;text-align:center;font-size:20px;color:#00e8fc;font-weight:normal;transform-origin:50% 0;transform:scaleX(1.1066);">12</div>
<div class="r" style="left:560px;top:540px;width:78px;height:36px;background:#232323;"></div>
<div class="r" style="left:560px;top:572px;width:78px;height:4px;background:#1f4347;"></div>
<div class="r" style="left:592px;top:572px;width:8px;height:4px;background:#00e8fc;"></div>
<div class="t" style="left:560.0px;top:545.07px;width:78px;text-align:center;font-size:20px;color:#00e8fc;font-weight:normal;transform-origin:50% 0;transform:scaleX(1.1172);">-20</div>
<div class="r" style="left:1126px;top:426px;width:6px;height:2px;background:#00e8fc;"></div>
<div class="r" style="left:1126px;top:426px;width:2px;height:6px;background:#00e8fc;"></div>
<div class="r" style="left:1198px;top:426px;width:6px;height:2px;background:#00e8fc;"></div>
<div class="r" style="left:1202px;top:426px;width:2px;height:6px;background:#00e8fc;"></div>
<div class="r" style="left:1126px;top:460px;width:6px;height:2px;background:#00e8fc;"></div>
<div class="r" style="left:1126px;top:456px;width:2px;height:6px;background:#00e8fc;"></div>
<div class="r" style="left:1198px;top:460px;width:6px;height:2px;background:#00e8fc;"></div>
<div class="r" style="left:1202px;top:456px;width:2px;height:6px;background:#00e8fc;"></div>
</div>
<div class="r" style="left:0px;top:610px;width:1838px;height:18px;background:#818181;"></div>
<div class="r" style="left:0px;top:628px;width:1838px;height:376px;background:#bdbdbd;"></div>
<div class="r" style="left:6.5px;top:632.5px;width:25px;height:25px;background:#ffb600;border:2px solid #555;border-radius:50%;box-sizing:border-box"></div>
<div class="r" style="left:38.5px;top:632.5px;width:25px;height:25px;background:#d6d6d6;border:2px solid #555;border-radius:50%;box-sizing:border-box"></div>
<div class="r" style="left:4px;top:662px;width:230px;height:166px;background:#232323;border-radius:4px"></div>
<div class="r" style="left:12px;top:670px;width:26px;height:26px;background:#00e8fc;"></div>
<div class="r" style="left:46px;top:670px;width:180px;height:26px;background:#00e8fc;"></div>
<div class="r" style="left:4px;top:832px;width:230px;height:169px;background:#232323;border-radius:4px"></div>
<div class="r" style="left:12px;top:840px;width:26px;height:26px;background:#ffb600;"></div>
<div class="r" style="left:46px;top:840px;width:180px;height:26px;background:#ffb600;"></div>
<div class="r" style="left:238px;top:662px;width:272px;height:165px;background:#a7a7a7;border-radius:4px"></div>
<div class="r" style="left:238px;top:832px;width:272px;height:169px;background:#a7a7a7;border-radius:4px"></div>
<div class="r" style="left:650px;top:632px;width:170px;height:40px;background:#232323;border-radius:3px 3px 0 0"></div>
<div class="r" style="left:824px;top:632px;width:170px;height:26px;background:#a7a7a7;border-radius:3px"></div>
<div class="r" style="left:998px;top:632px;width:170px;height:26px;background:#a7a7a7;border-radius:3px"></div>
<div class="r" style="left:514px;top:662px;width:798px;height:338px;background:#232323;border-radius:4px"></div>
<div class="r" style="left:645px;top:657px;width:5px;height:5px;background:#232323;"></div>
<div class="r" style="left:645px;top:657px;width:5px;height:5px;background:#bdbdbd;border-bottom-right-radius:5px"></div>
<div class="r" style="left:820px;top:657px;width:5px;height:5px;background:#232323;"></div>
<div class="r" style="left:820px;top:657px;width:5px;height:5px;background:#bdbdbd;border-bottom-left-radius:5px"></div>
<div class="r" style="left:600px;top:668px;width:34px;height:26px;background:transparent;border:2px solid #00e8fc;box-sizing:border-box;"></div>
<div class="r" style="left:640px;top:668px;width:118px;height:26px;background:#00e8fc;"></div>
<div class="r" style="left:514px;top:700px;width:798px;height:2px;background:#555;"></div>
<div class="r" style="left:912px;top:702px;width:2px;height:298px;background:#555;"></div>
<div class="r" style="left:514px;top:866px;width:798px;height:2px;background:#555;"></div>
<div class="r" style="left:922px;top:946px;width:10px;height:10px;background:transparent;border:2px solid #9a9a9a;box-sizing:border-box;"></div>
<div class="r" style="left:1316px;top:662px;width:230px;height:165px;background:#a7a7a7;border-radius:4px"></div>
<div class="r" style="left:1324px;top:670px;width:26px;height:26px;background:#00e8fc;border:2px solid #555;box-sizing:border-box;"></div>
<div class="r" style="left:1358px;top:670px;width:180px;height:26px;background:#e3e3e3;border:2px solid #555;box-sizing:border-box;"></div>
<div class="r" style="left:1446px;top:730px;width:78px;height:26px;background:#e3e3e3;border:2px solid #555;box-sizing:border-box;"></div>
<div class="r" style="left:1448px;top:732px;width:50px;height:22px;background:#00c8dc;"></div>
<div class="r" style="left:1446px;top:788px;width:78px;height:26px;background:#e3e3e3;border:2px solid #555;box-sizing:border-box;"></div>
<div class="r" style="left:1448px;top:790px;width:38px;height:22px;background:#00c8dc;"></div>
<div class="r" style="left:1316px;top:832px;width:230px;height:168px;background:#a7a7a7;border-radius:4px"></div>
<div class="r" style="left:1324px;top:840px;width:26px;height:26px;background:#ffb600;border:2px solid #555;box-sizing:border-box;"></div>
<div class="r" style="left:1358px;top:840px;width:180px;height:26px;background:#e3e3e3;border:2px solid #555;box-sizing:border-box;"></div>
<div class="r" style="left:1446px;top:902px;width:78px;height:26px;background:#e3e3e3;border:2px solid #555;box-sizing:border-box;"></div>
<div class="r" style="left:1448px;top:904px;width:50px;height:22px;background:#f2b000;"></div>
<div class="r" style="left:1446px;top:960px;width:78px;height:26px;background:#e3e3e3;border:2px solid #555;box-sizing:border-box;"></div>
<div class="r" style="left:1448px;top:962px;width:36px;height:22px;background:#f2b000;"></div>
<div class="r" style="left:1630px;top:632px;width:60px;height:26px;background:#ffb600;border:2px solid #555;box-sizing:border-box;"></div>
<div class="r" style="left:1742px;top:632px;width:26px;height:26px;background:#d2d2d2;border:2px solid #555;box-sizing:border-box;"></div>
<div class="r" style="left:1550px;top:662px;width:166px;height:165px;background:#a7a7a7;border-radius:4px"></div>
<div class="r" style="left:1558px;top:670px;width:74px;height:26px;background:#e3e3e3;border:2px solid #555;box-sizing:border-box;"></div>
<div class="r" style="left:1594px;top:672px;width:10px;height:22px;background:#00c8dc;"></div>
<div class="r" style="left:1664px;top:672px;width:8px;height:120px;background:#232323;"></div>
<div class="r" style="left:1664px;top:709px;width:8px;height:83px;background:#00e8fc;"></div>
<div class="r" style="left:1674px;top:672px;width:8px;height:120px;background:#232323;"></div>
<div class="r" style="left:1674px;top:703px;width:8px;height:89px;background:#00e8fc;"></div>
<div class="r" style="left:1550px;top:832px;width:166px;height:168px;background:#a7a7a7;border-radius:4px"></div>
<div class="r" style="left:1558px;top:840px;width:74px;height:26px;background:#e3e3e3;border:2px solid #555;box-sizing:border-box;"></div>
<div class="r" style="left:1594px;top:842px;width:10px;height:22px;background:#f2b000;"></div>
<div class="r" style="left:1664px;top:842px;width:8px;height:122px;background:#232323;"></div>
<div class="r" style="left:1664px;top:893.5px;width:8px;height:70.5px;background:#ffb600;"></div>
<div class="r" style="left:1674px;top:842px;width:8px;height:122px;background:#232323;"></div>
<div class="r" style="left:1674px;top:888px;width:8px;height:76px;background:#ffb600;"></div>
<div class="r" style="left:1720px;top:662px;width:114px;height:338px;background:#a7a7a7;border-radius:4px"></div>
<div class="r" style="left:1728px;top:670px;width:98px;height:26px;background:#00e8fc;border:2px solid #555;box-sizing:border-box;"></div>
<div class="r" style="left:1728px;top:702px;width:98px;height:26px;background:#e3e3e3;border:2px solid #555;box-sizing:border-box;"></div>
<div class="r" style="left:1728px;top:818px;width:98px;height:26px;background:#e3e3e3;border:2px solid #555;box-sizing:border-box;"></div>
<div class="r" style="left:1728px;top:760px;width:98px;height:26px;background:#e3e3e3;border:2px solid #555;box-sizing:border-box;"></div>
<div class="r" style="left:1730px;top:762px;width:38px;height:22px;background:#00c8dc;"></div>
<div class="r" style="left:1726px;top:852px;width:102px;height:2px;background:#7a7a7a;"></div>
<div class="r" style="left:1728px;top:884px;width:98px;height:26px;background:#e3e3e3;border:2px solid #555;box-sizing:border-box;"></div>
<div class="r" style="left:1730px;top:886px;width:28px;height:22px;background:#00c8dc;"></div>
<svg class="ov" width="1838" height="1004">
<path d="M51,638.5 L58,650 L44,650 Z" fill="#141414"/>
<path d="M207.3,677.8 L222,677.8 L214.65,687.6 Z" fill="#141414"/>
<circle cx="27" cy="745" r="13.9" stroke="#5a5a5a" stroke-width="1.9" fill="none"/>
<path d="M22.1,745 L30.1,740 L30.1,750 Z" fill="#00e8fc"/>
<circle cx="211" cy="745" r="13.9" stroke="#5a5a5a" stroke-width="1.9" fill="none"/>
<path d="M215.9,745 L207.9,740 L207.9,750 Z" fill="#00e8fc"/>
<path d="M207.3,847.8 L222,847.8 L214.65,857.6 Z" fill="#141414"/>
<circle cx="27" cy="915" r="13.9" stroke="#5a5a5a" stroke-width="1.9" fill="none"/>
<path d="M22.1,915 L30.1,910 L30.1,920 Z" fill="#ffb600"/>
<circle cx="211" cy="915" r="13.9" stroke="#5a5a5a" stroke-width="1.9" fill="none"/>
<path d="M215.9,915 L207.9,910 L207.9,920 Z" fill="#ffb600"/>
<g stroke="#00e8fc" stroke-width="2.6" fill="none" stroke-linejoin="round" stroke-linecap="round"><path d="M100.3,753.6 C104,730 106,716 110.3,716 C114.5,716 117.5,735 120,746 C123,762 125,773.5 127.8,773.5 C131,773.5 133,762 135,754.4"/><path d="M97.5,742.5 L90,742 L100.3,753.6 L137.4,736.9 L146.5,745.5 C150,749 149.5,752 144,751 L119.8,745.6"/></g>
<g stroke="#ffb600" stroke-width="2.3" fill="none" stroke-linejoin="miter" stroke-miterlimit="2"><path d="M91,897.7 L91,888 L105,897.7"/><path d="M119,897.7 L119,888 L133,897.7 L133,897.7 L133,888 L147,897.7"/><path d="M105,912.7 L105,903 L119,912.7 L119,912.7 L119,903 L133,912.7"/><path d="M91,928.7 L91,918.7 L105,928.7 L105,928.7 L105,918.7 L119,928.7"/><path d="M133,928.7 L133,918.7 L147,928.7"/><path d="M105,943.7 L105,934 L119,943.7 L119,943.7 L119,934 L133,943.7 L133,943.7 L133,934 L147,943.7"/></g>
<path d="M297.62,775.73 A34.65,34.65 0 0 1 293.92,721.15" stroke="#00e8fc" stroke-width="4.7" fill="none"/>
<path d="M297.75,718.19 A34.65,34.65 0 0 1 336.38,775.73" stroke="#262626" stroke-width="4.7" fill="none"/>
<path d="M311.41,740.73 L293.69,720.89" stroke="#262626" stroke-width="4" stroke-linecap="round" fill="none"/>
<path d="M411.62,775.73 A34.65,34.65 0 0 1 404.94,724.16" stroke="#00e8fc" stroke-width="4.7" fill="none"/>
<path d="M408.38,720.76 A34.65,34.65 0 1 1 450.38,775.73" stroke="#262626" stroke-width="4.7" fill="none"/>
<path d="M424.68,741.46 L404.68,723.93" stroke="#262626" stroke-width="4" stroke-linecap="round" fill="none"/>
<path d="M297.62,948.03 A34.65,34.65 0 1 1 336.75,890.83" stroke="#ffb600" stroke-width="4.7" fill="none"/>
<path d="M340.52,893.85 A34.65,34.65 0 0 1 336.38,948.03" stroke="#262626" stroke-width="4.7" fill="none"/>
<path d="M321.79,912.40 L336.95,890.54" stroke="#262626" stroke-width="4" stroke-linecap="round" fill="none"/>
<path d="M411.62,948.03 A34.65,34.65 0 0 1 404.94,896.46" stroke="#ffb600" stroke-width="4.7" fill="none"/>
<path d="M408.38,893.06 A34.65,34.65 0 1 1 450.38,948.03" stroke="#262626" stroke-width="4.7" fill="none"/>
<path d="M424.68,913.76 L404.68,896.23" stroke="#262626" stroke-width="4" stroke-linecap="round" fill="none"/>
<g stroke="#00e8fc" stroke-width="2" fill="none"><path d="M605.8,681 L628.2,681"/><rect x="611" y="677" width="12" height="8"/></g>
<circle cx="584.6" cy="722.8" r="5" fill="#55807f"/>
<path d="M887.6,722.2 L898.3,722.2 L893,728.4 Z" fill="#00e8fc"/>
<circle cx="1051" cy="723" r="5" fill="#3a8c93"/>
<path d="M1287.4,722.2 L1298.3,722.2 L1292.9,728.4 Z" fill="#00e8fc"/>
<path d="M530.4,851.5 L574,758 C582,781 597,790 618,794 L775,794 C787,830 812,840 842.3,850" stroke="#00e8fc" stroke-width="3" fill="none" stroke-linejoin="round"/>
<path d="M930.4,849.5 L930.4,764 C940,800 960,822 1006,834 L1175,834 C1195,838 1205,842 1216,849.5" stroke="#00e8fc" stroke-width="3" fill="none"/>
<rect x="569" y="753" width="10" height="10" stroke="#ffb600" stroke-width="2" fill="none"/>
<rect x="613" y="789" width="10" height="10" stroke="#ffb600" stroke-width="2" fill="none"/>
<rect x="837" y="845" width="10" height="10" stroke="#ffb600" stroke-width="2" fill="none"/>
<rect x="925" y="759" width="10" height="10" stroke="#ffb600" stroke-width="2" fill="none"/>
<rect x="925" y="845" width="10" height="10" stroke="#ffb600" stroke-width="2" fill="none"/>
<rect x="1001" y="829" width="10" height="10" stroke="#ffb600" stroke-width="2" fill="none"/>
<rect x="1211" y="845" width="10" height="10" stroke="#ffb600" stroke-width="2" fill="none"/>
<path d="M552.8,800.5 L557.3,805 L552.8,809.5 L548.3,805 Z" stroke="#e0606e" stroke-width="1.8" fill="none"/>
<path d="M597,780.3 L601.5,784.8 L597,789.3 L592.5,784.8 Z" stroke="#e0606e" stroke-width="1.8" fill="none"/>
<path d="M808.7,832.1 L813.2,836.6 L808.7,841.1 L804.2,836.6 Z" stroke="#e0606e" stroke-width="1.8" fill="none"/>
<path d="M930.6,802.2 L935.1,806.7 L930.6,811.2 L926.1,806.7 Z" stroke="#e0606e" stroke-width="1.8" fill="none"/>
<path d="M969,812.2 L973.5,816.7 L969,821.2 L964.5,816.7 Z" stroke="#e0606e" stroke-width="1.8" fill="none"/>
<path d="M1197,834.5 L1201.5,839 L1197,843.5 L1192.5,839 Z" stroke="#e0606e" stroke-width="1.8" fill="none"/>
<path d="M1521,678.5 L1534,678.5 L1527.5,687.5 Z" fill="#141414"/>
<path d="M1359.62,779.73 A34.65,34.65 0 1 1 1409.93,766.62" stroke="#00e8fc" stroke-width="4.7" fill="none"/>
<path d="M1407.45,770.78 A34.65,34.65 0 0 1 1398.38,779.73" stroke="#262626" stroke-width="4.7" fill="none"/>
<path d="M1386.50,754.79 L1410.24,766.78" stroke="#262626" stroke-width="4" stroke-linecap="round" fill="none"/>
<path d="M1521,848.5 L1534,848.5 L1527.5,857.5 Z" fill="#141414"/>
<path d="M1359.62,951.73 A34.65,34.65 0 0 1 1384.80,888.84" stroke="#ffb600" stroke-width="4.7" fill="none"/>
<path d="M1389.50,889.98 A34.65,34.65 0 0 1 1398.38,951.73" stroke="#262626" stroke-width="4.7" fill="none"/>
<path d="M1380.41,914.72 L1384.86,888.49" stroke="#262626" stroke-width="4" stroke-linecap="round" fill="none"/>
<circle cx="1703" cy="645" r="7" fill="#646464"/>
<g stroke="#141414" stroke-width="2.1" fill="none"><path d="M1746.8,641.5 L1746.8,654 C1750.5,653 1752.6,651 1752.4,648.6 C1752.2,646.4 1749.2,646.4 1746.8,648.6"/><path d="M1757,636.5 L1756.3,646 M1761.5,636.5 L1760.8,646 M1754,639.6 L1764,639.6 M1754,643.2 L1764,643.2"/></g>
<circle cx="1787" cy="645" r="12.2" stroke="#555" stroke-width="2" fill="#c9c9c9"/>
<circle cx="1819" cy="645" r="12.2" stroke="#555" stroke-width="2" fill="#c9c9c9"/>
<g stroke="#141414" stroke-width="2.3" fill="none" stroke-linecap="round"><path d="M1787.4,639 C1784,639.3 1781.6,641.6 1781.1,644.8"/><path d="M1786.4,651.1 C1790,650.8 1792.4,648.6 1792.9,645.6"/></g>
<path d="M1777.9,644.3 L1784.4,644.3 L1781.1,648.2 Z M1789.7,645.8 L1796.2,645.8 L1793,641.8 Z" fill="#141414"/>
<path d="M1812.2,638.3 L1822,638.3 L1825.8,642 L1825.8,651.7 L1812.2,651.7 Z" fill="#141414"/><rect x="1815.7" y="640.2" width="6.4" height="3.7" fill="#c9c9c9"/>
<path d="M1588,736 L1602.3,736 L1595.15,744.4 Z" fill="#00e8fc"/>
<path d="M1581.75,792.85 A23.70,23.70 0 0 1 1595.00,749.50" stroke="#262626" stroke-width="4.6" fill="none"/>
<path d="M1595.00,749.50 A23.70,23.70 0 0 1 1598.01,749.69" stroke="#00e8fc" stroke-width="4.6" fill="none"/>
<path d="M1601.65,750.45 A23.70,23.70 0 0 1 1608.25,792.85" stroke="#262626" stroke-width="4.6" fill="none"/>
<path d="M1595.06,772.70 L1598.05,749.39" stroke="#262626" stroke-width="4" stroke-linecap="round" fill="none"/>
<path d="M1686.3,711 L1702.8,702.2 L1702.8,719.8 Z" stroke="#333" stroke-width="2" stroke-linejoin="miter" fill="#d0d0d0"/>
<path d="M1588,908 L1602.3,908 L1595.15,916.4 Z" fill="#ffb600"/>
<path d="M1581.75,964.25 A23.70,23.70 0 0 1 1593.79,920.93" stroke="#262626" stroke-width="4.6" fill="none"/>
<path d="M1593.79,920.93 A23.70,23.70 0 0 1 1595.00,920.90" stroke="#ffb600" stroke-width="4.6" fill="none"/>
<path d="M1597.51,921.03 A23.70,23.70 0 0 1 1608.25,964.25" stroke="#262626" stroke-width="4.6" fill="none"/>
<path d="M1594.97,944.10 L1593.78,920.63" stroke="#262626" stroke-width="4" stroke-linecap="round" fill="none"/>
<path d="M1686.3,909 L1702.8,900.2 L1702.8,917.8 Z" stroke="#333" stroke-width="2" stroke-linejoin="miter" fill="#d0d0d0"/>
<path d="M1809.5,711 L1821,711 L1815.25,719.5 Z" fill="#141414"/>
<path d="M1809.5,827 L1821,827 L1815.25,835.5 Z" fill="#141414"/>
<path d="M1748.70,982.70 A16.20,16.20 0 0 1 1737.24,955.04" stroke="#00e8fc" stroke-width="4.8" fill="none"/>
<path d="M1739.88,952.91 A16.20,16.20 0 0 1 1764.90,966.50" stroke="#262626" stroke-width="4.8" fill="none"/>
<path d="M1748.35,966.15 L1736.96,954.76" stroke="#262626" stroke-width="4" stroke-linecap="round" fill="none"/>
<path d="M0,0 L3,0 A3,3 0 0 0 0,3 Z" fill="#000"/><path d="M1838,1004 L1835,1004 A3,3 0 0 0 1838,1001 Z" fill="#000"/>
</svg>
<div class="t" style="left:72.5px;top:636.07px;font-size:20px;color:#141414;font-weight:normal;transform-origin:0 0;transform:scaleX(1.1407);-webkit-text-stroke:0.8px currentColor">Meld</div>
<div class="t" style="left:270.5px;top:635.27px;width:200px;text-align:center;font-size:20px;color:#141414;font-weight:normal;transform-origin:50% 0;transform:scaleX(1.0786);-webkit-text-stroke:0.8px currentColor">Engines</div>
<div class="t" style="left:1325.5px;top:635.47px;width:200px;text-align:center;font-size:20px;color:#141414;font-weight:normal;transform-origin:50% 0;transform:scaleX(1.1843);-webkit-text-stroke:0.8px currentColor">Filters</div>
<div class="t" style="left:1572.6px;top:635.07px;font-size:20px;color:#141414;font-weight:normal;transform-origin:0 0;transform:scaleX(1.1263);">Mix</div>
<div class="t" style="left:12.0px;top:673.72px;width:26px;text-align:center;font-size:19px;color:#141414;font-weight:normal;transform-origin:50% 0;transform:scaleX(0.9173);">A</div>
<div class="t" style="left:50.4px;top:672.87px;font-size:20px;color:#141414;font-weight:normal;transform-origin:0 0;transform:scaleX(1.0312);">Fold Fm</div>
<div class="t" style="left:16.4px;top:797.07px;font-size:20px;color:#00e8fc;font-weight:normal;transform-origin:0 0;transform:scaleX(1.1321);">0 oct</div>
<div class="t" style="left:101.9px;top:797.07px;font-size:20px;color:#00e8fc;font-weight:normal;transform-origin:0 0;transform:scaleX(1.1182);">0 st</div>
<div class="t" style="left:183.9px;top:797.07px;font-size:20px;color:#00e8fc;font-weight:normal;transform-origin:0 0;transform:scaleX(1.1502);">0 ct</div>
<div class="t" style="left:12.0px;top:843.72px;width:26px;text-align:center;font-size:19px;color:#141414;font-weight:normal;transform-origin:50% 0;transform:scaleX(0.9907);">B</div>
<div class="t" style="left:51.0px;top:842.87px;font-size:20px;color:#141414;font-weight:normal;transform-origin:0 0;">Swarm Saw&nbsp;&nbsp;(♭#)</div>
<div class="t" style="left:15.6px;top:968.77px;font-size:20px;color:#ffb600;font-weight:normal;transform-origin:0 0;transform:scaleX(1.1511);">1 oct</div>
<div class="t" style="left:101.9px;top:968.77px;font-size:20px;color:#ffb600;font-weight:normal;transform-origin:0 0;transform:scaleX(1.1182);">0 st</div>
<div class="t" style="left:183.9px;top:968.77px;font-size:20px;color:#ffb600;font-weight:normal;transform-origin:0 0;transform:scaleX(1.1502);">0 ct</div>
<div class="t" style="left:257.0px;top:680.57px;width:120px;text-align:center;font-size:20px;color:#141414;font-weight:normal;transform-origin:50% 0;transform:scaleX(1.0974);">Amount</div>
<div class="t" style="left:255.0px;top:784.77px;width:120px;text-align:center;font-size:20px;color:#141414;font-weight:normal;transform-origin:50% 0;transform:scaleX(1.0457);">35.7</div>
<div class="t" style="left:371.0px;top:680.57px;width:120px;text-align:center;font-size:20px;color:#141414;font-weight:normal;transform-origin:50% 0;transform:scaleX(1.0428);">Shape</div>
<div class="t" style="left:369.0px;top:784.77px;width:120px;text-align:center;font-size:20px;color:#141414;font-weight:normal;transform-origin:50% 0;transform:scaleX(1.0802);">33.3</div>
<div class="t" style="left:257.0px;top:853.37px;width:120px;text-align:center;font-size:20px;color:#141414;font-weight:normal;transform-origin:50% 0;transform:scaleX(1.1748);">Motion</div>
<div class="t" style="left:255.0px;top:957.27px;width:120px;text-align:center;font-size:20px;color:#141414;font-weight:normal;transform-origin:50% 0;transform:scaleX(1.0811);">61.9</div>
<div class="t" style="left:371.0px;top:853.37px;width:120px;text-align:center;font-size:20px;color:#141414;font-weight:normal;transform-origin:50% 0;transform:scaleX(1.0926);">Spacing</div>
<div class="t" style="left:369.0px;top:957.27px;width:120px;text-align:center;font-size:20px;color:#141414;font-weight:normal;transform-origin:50% 0;transform:scaleX(1.0802);">33.3</div>
<div class="t" style="left:685.0px;top:635.07px;width:100px;text-align:center;font-size:20px;color:#00e8fc;font-weight:normal;transform-origin:50% 0;transform:scaleX(0.9173);">A</div>
<div class="t" style="left:858.0px;top:635.07px;width:100px;text-align:center;font-size:20px;color:#141414;font-weight:normal;transform-origin:50% 0;transform:scaleX(0.9907);">B</div>
<div class="t" style="left:1003.0px;top:635.07px;width:160px;text-align:center;font-size:20px;color:#141414;font-weight:normal;transform-origin:50% 0;transform:scaleX(1.1556);">Settings</div>
<div class="t" style="left:640.0px;top:671.07px;width:118px;text-align:center;font-size:20px;color:#141414;font-weight:normal;transform-origin:50% 0;transform:scaleX(1.0615);">Envelopes</div>
<div class="t" style="left:827.8px;top:671.07px;font-size:20px;color:#00e8fc;font-weight:normal;transform-origin:0 0;transform:scaleX(0.9721);">LFOs</div>
<div class="t" style="left:524.6px;top:712.57px;font-size:20px;color:#c8c8c8;font-weight:normal;transform-origin:0 0;transform:scaleX(1.0819);">Amp</div>
<div class="t" style="left:807.3px;top:712.57px;font-size:20px;color:#00e8fc;font-weight:normal;transform-origin:0 0;transform:scaleX(1.1323);">Trigger</div>
<div class="t" style="left:923.4px;top:712.57px;font-size:20px;color:#c8c8c8;font-weight:normal;transform-origin:0 0;transform:scaleX(1.1558);">Modulation</div>
<div class="t" style="left:1205.7px;top:712.57px;font-size:20px;color:#00e8fc;font-weight:normal;transform-origin:0 0;transform:scaleX(1.0969);">None</div>
<div class="t" style="left:525.2px;top:876.87px;font-size:20px;color:#a0a0a0;font-weight:normal;transform-origin:0 0;transform:scaleX(0.9173);">A</div>
<div class="t" style="left:616.1px;top:876.87px;font-size:20px;color:#a0a0a0;font-weight:normal;transform-origin:0 0;transform:scaleX(1.0672);">D</div>
<div class="t" style="left:708.3px;top:876.87px;font-size:20px;color:#a0a0a0;font-weight:normal;transform-origin:0 0;transform:scaleX(0.9739);">S</div>
<div class="t" style="left:800.3px;top:876.87px;font-size:20px;color:#a0a0a0;font-weight:normal;transform-origin:0 0;transform:scaleX(0.9412);">R</div>
<div class="t" style="left:941.2px;top:876.87px;font-size:20px;color:#a0a0a0;font-weight:normal;transform-origin:0 0;transform:scaleX(0.9173);">A</div>
<div class="t" style="left:1031.6px;top:876.87px;font-size:20px;color:#a0a0a0;font-weight:normal;transform-origin:0 0;transform:scaleX(1.0672);">D</div>
<div class="t" style="left:1124.3px;top:876.87px;font-size:20px;color:#a0a0a0;font-weight:normal;transform-origin:0 0;transform:scaleX(0.9739);">S</div>
<div class="t" style="left:1216.3px;top:876.87px;font-size:20px;color:#a0a0a0;font-weight:normal;transform-origin:0 0;transform:scaleX(0.9412);">R</div>
<div class="t" style="left:528.8px;top:903.07px;font-size:20px;color:#00e8fc;font-weight:normal;transform-origin:0 0;transform:scaleX(1.0376);">727 ms</div>
<div class="t" style="left:619.8px;top:903.07px;font-size:20px;color:#00e8fc;font-weight:normal;transform-origin:0 0;transform:scaleX(1.0438);">678 ms</div>
<div class="t" style="left:712.3px;top:903.07px;font-size:20px;color:#00e8fc;font-weight:normal;transform-origin:0 0;transform:scaleX(1.0672);">-8.6 dB</div>
<div class="t" style="left:804.8px;top:903.07px;font-size:20px;color:#00e8fc;font-weight:normal;transform-origin:0 0;transform:scaleX(1.0356);">4.23 s</div>
<div class="t" style="left:944.3px;top:903.07px;font-size:20px;color:#00e8fc;font-weight:normal;transform-origin:0 0;transform:scaleX(1.0503);">0.00 ms</div>
<div class="t" style="left:1036.1px;top:903.07px;font-size:20px;color:#00e8fc;font-weight:normal;transform-origin:0 0;transform:scaleX(1.0511);">6.03 s</div>
<div class="t" style="left:1128.3px;top:903.07px;font-size:20px;color:#00e8fc;font-weight:normal;transform-origin:0 0;transform:scaleX(1.0115);">17 %</div>
<div class="t" style="left:1219.8px;top:903.07px;font-size:20px;color:#00e8fc;font-weight:normal;transform-origin:0 0;transform:scaleX(1.0438);">600 ms</div>
<div class="t" style="left:525.2px;top:940.87px;font-size:20px;color:#a0a0a0;font-weight:normal;transform-origin:0 0;transform:scaleX(1.0499);">A Slope</div>
<div class="t" style="left:616.1px;top:940.87px;font-size:20px;color:#a0a0a0;font-weight:normal;transform-origin:0 0;transform:scaleX(1.0378);">D Slope</div>
<div class="t" style="left:800.2px;top:940.87px;font-size:20px;color:#a0a0a0;font-weight:normal;transform-origin:0 0;transform:scaleX(1.0218);">R Slope</div>
<div class="t" style="left:939.6px;top:940.87px;font-size:20px;color:#a0a0a0;font-weight:normal;transform-origin:0 0;transform:scaleX(1.2345);">Initial</div>
<div class="t" style="left:1031.6px;top:940.87px;font-size:20px;color:#a0a0a0;font-weight:normal;transform-origin:0 0;transform:scaleX(1.0386);">Peak</div>
<div class="t" style="left:1216.0px;top:940.87px;font-size:20px;color:#a0a0a0;font-weight:normal;transform-origin:0 0;transform:scaleX(1.1040);">Final</div>
<div class="t" style="left:529.0px;top:967.57px;font-size:20px;color:#f06a78;font-weight:normal;transform-origin:0 0;transform:scaleX(1.0141);">0.0 %</div>
<div class="t" style="left:620.0px;top:967.57px;font-size:20px;color:#f06a78;font-weight:normal;transform-origin:0 0;transform:scaleX(0.9887);">50 %</div>
<div class="t" style="left:804.4px;top:967.57px;font-size:20px;color:#f06a78;font-weight:normal;transform-origin:0 0;transform:scaleX(0.9887);">50 %</div>
<div class="t" style="left:944.3px;top:967.57px;font-size:20px;color:#00e8fc;font-weight:normal;transform-origin:0 0;transform:scaleX(1.0141);">0.0 %</div>
<div class="t" style="left:1036.3px;top:967.57px;font-size:20px;color:#00e8fc;font-weight:normal;transform-origin:0 0;transform:scaleX(1.0136);">93 %</div>
<div class="t" style="left:1220.0px;top:967.57px;font-size:20px;color:#00e8fc;font-weight:normal;transform-origin:0 0;transform:scaleX(1.0141);">0.0 %</div>
<div class="t" style="left:1324.0px;top:672.92px;width:26px;text-align:center;font-size:19px;color:#141414;font-weight:normal;transform-origin:50% 0;transform:scaleX(0.9173);">A</div>
<div class="t" style="left:1362.5px;top:672.77px;font-size:20px;color:#141414;font-weight:normal;transform-origin:0 0;transform:scaleX(1.0348);">LP Switched Res</div>
<div class="t" style="left:1309.0px;top:789.57px;width:140px;text-align:center;font-size:20px;color:#141414;font-weight:normal;transform-origin:50% 0;transform:scaleX(1.0537);">10.0 kHz</div>
<div class="t" style="left:1455.5px;top:707.37px;width:60px;text-align:center;font-size:20px;color:#141414;font-weight:normal;transform-origin:50% 0;transform:scaleX(0.9635);">Q</div>
<div class="t" style="left:1446.0px;top:732.67px;width:78px;text-align:center;font-size:20px;color:#141414;font-weight:normal;transform-origin:50% 0;transform:scaleX(1.0749);">66.4</div>
<div class="t" style="left:1455.5px;top:765.07px;width:60px;text-align:center;font-size:20px;color:#141414;font-weight:normal;transform-origin:50% 0;transform:scaleX(1.1706);">Lofi</div>
<div class="t" style="left:1446.0px;top:790.37px;width:78px;text-align:center;font-size:20px;color:#141414;font-weight:normal;transform-origin:50% 0;transform:scaleX(1.0777);">50.8</div>
<div class="t" style="left:1324.0px;top:842.92px;width:26px;text-align:center;font-size:19px;color:#141414;font-weight:normal;transform-origin:50% 0;transform:scaleX(0.9907);">B</div>
<div class="t" style="left:1362.5px;top:842.77px;font-size:20px;color:#141414;font-weight:normal;transform-origin:0 0;transform:scaleX(1.0348);">LP Switched Res</div>
<div class="t" style="left:1309.0px;top:961.57px;width:140px;text-align:center;font-size:20px;color:#141414;font-weight:normal;transform-origin:50% 0;transform:scaleX(1.0357);">890 Hz</div>
<div class="t" style="left:1455.5px;top:879.37px;width:60px;text-align:center;font-size:20px;color:#141414;font-weight:normal;transform-origin:50% 0;transform:scaleX(0.9635);">Q</div>
<div class="t" style="left:1446.0px;top:904.67px;width:78px;text-align:center;font-size:20px;color:#141414;font-weight:normal;transform-origin:50% 0;transform:scaleX(1.0749);">66.4</div>
<div class="t" style="left:1455.5px;top:937.07px;width:60px;text-align:center;font-size:20px;color:#141414;font-weight:normal;transform-origin:50% 0;transform:scaleX(1.1706);">Lofi</div>
<div class="t" style="left:1446.0px;top:962.37px;width:78px;text-align:center;font-size:20px;color:#141414;font-weight:normal;transform-origin:50% 0;transform:scaleX(1.0667);">49.2</div>
<div class="t" style="left:1630.0px;top:635.07px;width:60px;text-align:center;font-size:20px;color:#141414;font-weight:normal;transform-origin:50% 0;transform:scaleX(1.1506);">Limit</div>
<div class="t" style="left:1558.0px;top:672.87px;width:74px;text-align:center;font-size:20px;color:#141414;font-weight:normal;transform-origin:50% 0;transform:scaleX(1.0380);">13R</div>
<div class="t" style="left:1555.4px;top:712.87px;width:80px;text-align:center;font-size:20px;color:#141414;font-weight:normal;transform-origin:50% 0;transform:scaleX(1.0784);">Tone</div>
<div class="t" style="left:1545.0px;top:797.47px;width:100px;text-align:center;font-size:20px;color:#141414;font-weight:normal;transform-origin:50% 0;transform:scaleX(1.0724);">0.05</div>
<div class="t" style="left:1644.6px;top:797.07px;font-size:20px;color:#141414;font-weight:normal;transform-origin:0 0;transform:scaleX(1.0375);">0.2 dB</div>
<div class="t" style="left:1558.0px;top:842.87px;width:74px;text-align:center;font-size:20px;color:#141414;font-weight:normal;transform-origin:50% 0;transform:scaleX(1.0380);">13R</div>
<div class="t" style="left:1555.4px;top:884.87px;width:80px;text-align:center;font-size:20px;color:#141414;font-weight:normal;transform-origin:50% 0;transform:scaleX(1.0784);">Tone</div>
<div class="t" style="left:1545.0px;top:969.07px;width:100px;text-align:center;font-size:20px;color:#141414;font-weight:normal;transform-origin:50% 0;transform:scaleX(1.1053);">-0.02</div>
<div class="t" style="left:1641.9px;top:969.07px;font-size:20px;color:#141414;font-weight:normal;transform-origin:0 0;transform:scaleX(1.0509);">-17 dB</div>
<div class="t" style="left:1728.0px;top:673.07px;width:98px;text-align:center;font-size:20px;color:#141414;font-weight:normal;transform-origin:50% 0;transform:scaleX(1.0375);">Poly</div>
<div class="t" style="left:1732.7px;top:704.87px;font-size:20px;color:#141414;font-weight:normal;transform-origin:0 0;transform:scaleX(1.0526);">8</div>
<div class="t" style="left:1732.5px;top:820.87px;font-size:20px;color:#141414;font-weight:normal;transform-origin:0 0;transform:scaleX(1.0400);">2</div>
<div class="t" style="left:1728.6px;top:737.07px;font-size:20px;color:#141414;font-weight:normal;transform-origin:0 0;transform:scaleX(1.0833);">Spread</div>
<div class="t" style="left:1728.0px;top:763.07px;width:98px;text-align:center;font-size:20px;color:#141414;font-weight:normal;transform-origin:50% 0;transform:scaleX(0.9955);">40 %</div>
<div class="t" style="left:1728.0px;top:794.77px;font-size:20px;color:#141414;font-weight:normal;transform-origin:0 0;transform:scaleX(1.0891);">Unison</div>
<div class="t" style="left:1727.8px;top:860.67px;font-size:20px;color:#141414;font-weight:normal;transform-origin:0 0;transform:scaleX(1.1109);">Drive</div>
<div class="t" style="left:1728.0px;top:887.07px;width:98px;text-align:center;font-size:20px;color:#141414;font-weight:normal;transform-origin:50% 0;transform:scaleX(0.9887);">30 %</div>
<div class="t" style="left:1730.9px;top:921.07px;font-size:20px;color:#141414;font-weight:normal;transform-origin:0 0;transform:scaleX(1.0578);">Volume</div>
<div class="t" style="left:1757.1px;top:972.77px;font-size:20px;color:#141414;font-weight:normal;transform-origin:0 0;transform:scaleX(1.0432);">-6.0 dB</div>
</div></body></html>
